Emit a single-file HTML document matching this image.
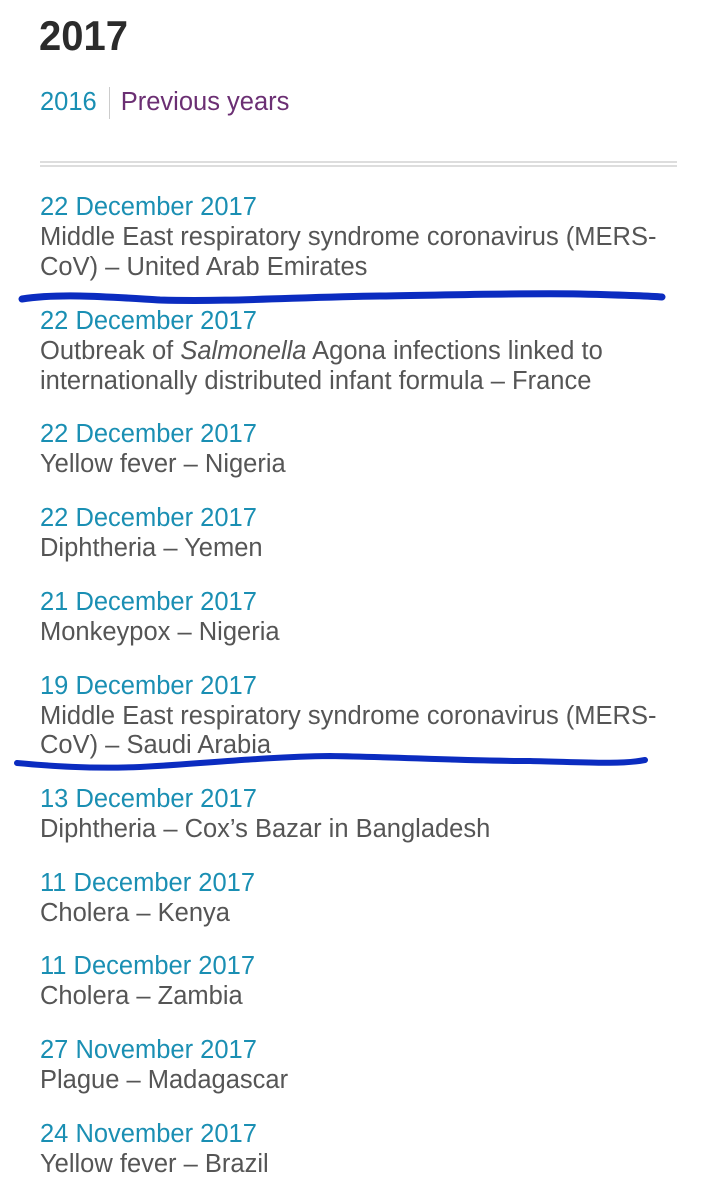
<!DOCTYPE html>
<html><head><meta charset="utf-8"><style>
html,body{margin:0;padding:0;background:#fff;width:717px;height:1200px;overflow:hidden;position:relative;font-family:"Liberation Sans",Arial,sans-serif}
.l{position:absolute;left:40px;white-space:nowrap;font-size:25.5px;line-height:30px;height:30px}
.d{color:#1a8fb3}
.t{color:#555}
h1{position:absolute;left:39px;top:12px;margin:0;font-size:40px;font-weight:bold;color:#2b2b2b;line-height:46px;transform:scaleY(1.05);transform-origin:top left}
</style></head><body>
<h1>2017</h1>
<div class="l" style="top:87px"><span style="color:#1a8fb3">2016</span><span style="display:inline-block;width:1px;height:32px;background:#ccc;vertical-align:middle;margin:0 11px 0 12px"></span><span style="color:#6b2f73">Previous years</span></div>
<div style="position:absolute;left:40px;top:161px;width:637px;height:2px;background:#ddd"></div>
<div style="position:absolute;left:40px;top:165px;width:637px;height:2px;background:#ddd"></div>

<div class="l d" style="top:192px">22 December 2017</div>
<div class="l t" style="top:222px">Middle East respiratory syndrome coronavirus (MERS-</div>
<div class="l t" style="top:252px">CoV) – United Arab Emirates</div>

<div class="l d" style="top:306px">22 December 2017</div>
<div class="l t" style="top:336px">Outbreak of <i>Salmonella</i> Agona infections linked to</div>
<div class="l t" style="top:366px">internationally distributed infant formula – France</div>

<div class="l d" style="top:419px">22 December 2017</div>
<div class="l t" style="top:449px">Yellow fever – Nigeria</div>

<div class="l d" style="top:503px">22 December 2017</div>
<div class="l t" style="top:533px">Diphtheria – Yemen</div>

<div class="l d" style="top:587px">21 December 2017</div>
<div class="l t" style="top:617px">Monkeypox – Nigeria</div>

<div class="l d" style="top:671px">19 December 2017</div>
<div class="l t" style="top:701px">Middle East respiratory syndrome coronavirus (MERS-</div>
<div class="l t" style="top:730px">CoV) – Saudi Arabia</div>

<div class="l d" style="top:784px">13 December 2017</div>
<div class="l t" style="top:814px">Diphtheria – Cox’s Bazar in Bangladesh</div>

<div class="l d" style="top:868px">11 December 2017</div>
<div class="l t" style="top:898px">Cholera – Kenya</div>

<div class="l d" style="top:951px">11 December 2017</div>
<div class="l t" style="top:981px">Cholera – Zambia</div>

<div class="l d" style="top:1035px">27 November 2017</div>
<div class="l t" style="top:1065px">Plague – Madagascar</div>

<div class="l d" style="top:1119px">24 November 2017</div>
<div class="l t" style="top:1149px">Yellow fever – Brazil</div>

<svg style="position:absolute;left:0;top:0" width="717" height="1200">
<path d="M22 299 C60 293 110 297 160 300 C230 302 300 297 380 296 C450 295 520 293 580 294 C620 295 650 296 662 297" fill="none" stroke="#0b2cc0" stroke-width="7" stroke-linecap="round"/>
<path d="M17 763 C50 766 90 769 140 767 C200 764 260 757 330 756 C400 757 460 761 530 761 C580 762 620 765 645 760" fill="none" stroke="#0b2cc0" stroke-width="6" stroke-linecap="round"/>
</svg>
</body></html>
